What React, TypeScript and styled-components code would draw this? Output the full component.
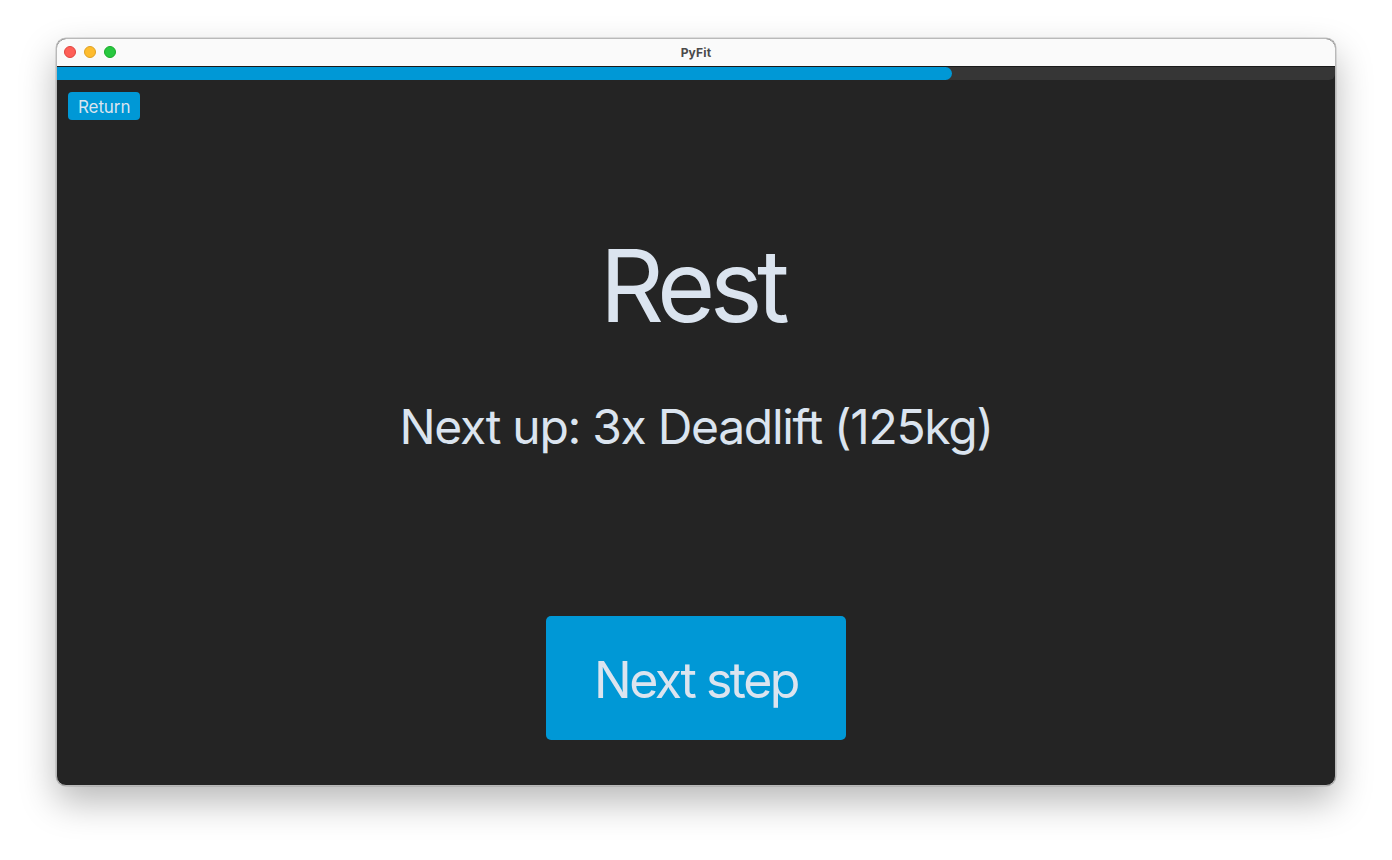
import React from 'react';
import styled, { createGlobalStyle } from 'styled-components';

const GlobalStyle = createGlobalStyle`
  html, body {
    margin: 0;
    padding: 0;
    background: #ffffff;
  }
  body {
    font-family: Inter, "Noto Sans", "Liberation Sans", sans-serif;
  }
`;

const Page = styled.div`
  box-sizing: border-box;
  width: 1392px;
  height: 860px;
  padding: 38px 56px 0;
`;

const Window = styled.div`
  display: flex;
  flex-direction: column;
  box-sizing: border-box;
  width: 1280px;
  height: 748px;
  overflow: hidden;
  border: 1px solid #b9b9b9;
  border-radius: 10px;
  background: #242424;
  box-shadow: 0 16px 36px rgba(0, 0, 0, 0.28), 0 0 0 0.5px rgba(0, 0, 0, 0.2);
`;

const TitleBar = styled.div`
  position: relative;
  display: flex;
  flex-shrink: 0;
  align-items: center;
  justify-content: center;
  height: 27px;
  border-bottom: 1px solid #1a1a1a;
  background: #fafafa;
`;

const Lights = styled.div`
  position: absolute;
  top: 7px;
  left: 7px;
  display: flex;
  gap: 8px;
`;

const Light = styled.span<{ $color: string; $ring: string }>`
  width: 12px;
  height: 12px;
  box-sizing: border-box;
  border: 0.5px solid ${(p) => p.$ring};
  border-radius: 50%;
  background: ${(p) => p.$color};
`;

const Title = styled.div`
  color: #4a4a4a;
  font-size: 12px;
  font-weight: 700;
  letter-spacing: 0.2px;
`;

const Track = styled.div`
  flex-shrink: 0;
  height: 13px;
  background: #363636;
  border-radius: 0 0 6px 0;
`;

const Fill = styled.div`
  height: 100%;
  border-radius: 0 7px 7px 0;
  background: #0098d6;
`;

const Content = styled.div`
  display: flex;
  flex: 1;
  flex-direction: column;
  padding: 12px 11px;
`;

const ReturnButton = styled.button`
  align-self: flex-start;
  height: 28px;
  padding: 1px 10px 0;
  border: none;
  border-radius: 4px;
  background: #0098d6;
  color: #dbe4ef;
  font-family: inherit;
  font-size: 17px;
  letter-spacing: -0.1px;
  cursor: pointer;
`;

const Center = styled.div`
  display: flex;
  flex-direction: column;
  align-items: center;
`;

const Heading = styled.h1`
  margin: 116px 0 0 -8px;
  color: #dbe4ef;
  font-size: 100px;
  font-weight: 400;
  line-height: 100px;
  letter-spacing: -5.5px;
`;

const NextUp = styled.div`
  margin-top: 67px;
  color: #dbe4ef;
  font-size: 48px;
  line-height: 48px;
  letter-spacing: -1.3px;
`;

const StepButton = styled.button`
  width: 300px;
  height: 124px;
  margin-top: 165px;
  padding-top: 4px;
  border: none;
  border-radius: 5px;
  background: #0098d6;
  color: #dbe4ef;
  font-family: inherit;
  font-size: 50px;
  letter-spacing: -2.5px;
  cursor: pointer;
`;

export default function App() {
  const progress = 70;

  return (
    <>
      <GlobalStyle />
      <Page>
        <Window>
          <TitleBar>
            <Lights>
              <Light $color="#fe5f57" $ring="#e0443e" />
              <Light $color="#febc2e" $ring="#dea123" />
              <Light $color="#28c840" $ring="#1aab29" />
            </Lights>
            <Title>PyFit</Title>
          </TitleBar>
          <Track>
            <Fill style={{ width: `${progress}%` }} />
          </Track>
          <Content>
            <ReturnButton>Return</ReturnButton>
            <Center>
              <Heading>Rest</Heading>
              <NextUp>Next up: 3x Deadlift (125kg)</NextUp>
              <StepButton>Next step</StepButton>
            </Center>
          </Content>
        </Window>
      </Page>
    </>
  );
}
